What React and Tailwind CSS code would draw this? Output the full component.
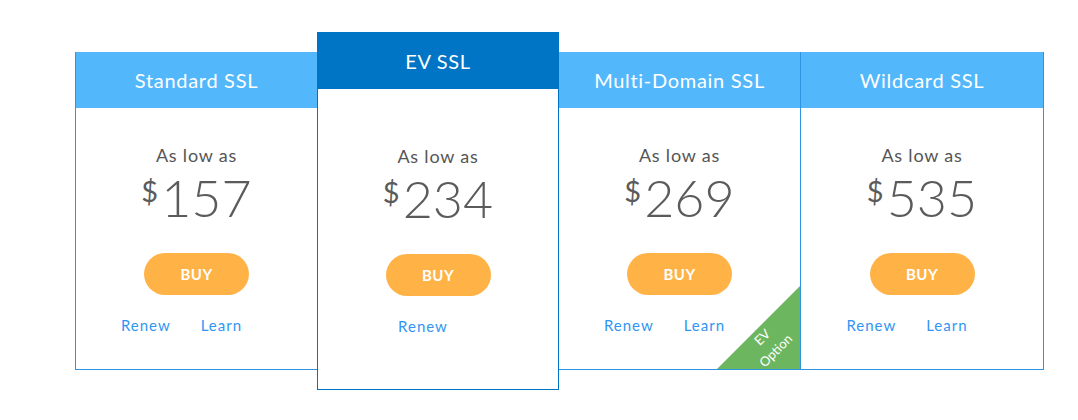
import React from "react";

const plans = [
  { title: "Standard SSL", price: "157", learn: true },
  { title: "EV SSL", price: "234", featured: true },
  { title: "Multi-Domain SSL", price: "269", learn: true, ribbon: true },
  { title: "Wildcard SSL", price: "535", learn: true },
];

const Card = ({ title, price, learn, featured, ribbon, className }) => {
  return (
    <div
      className={`relative flex flex-col bg-white ${
        featured ? "h-[358px] border border-[#0074c4]" : "mt-[20px] h-[318px] border-b border-[#2f93e4]"
      } ${className}`}
    >
      <div
        className={`flex h-[56px] items-center justify-center text-[20px] tracking-[0.7px] text-white ${
          featured ? "bg-[#0075c5]" : "bg-[#53b7fc]"
        }`}
      >
        {title}
      </div>
      <div className={`flex flex-col items-center ${featured ? "pt-[55px]" : "pt-[35px]"}`}>
        <div className="text-[18px] leading-[24px] tracking-[0.8px] text-[#555555]">As low as</div>
        <div className="mt-[4px] flex items-start text-[#5b5b5b]">
          <span className="mt-[5px] text-[29px] leading-none">$</span>
          <span className="ml-[3px] text-[52px] font-light leading-[52px]">{price}</span>
        </div>
        <button className="mt-[30px] h-[42px] w-[105px] rounded-full bg-[#ffb347] text-[15px] font-bold tracking-[0.5px] text-white">
          BUY
        </button>
        <div className="mt-[20px] flex gap-[30px] pr-[30px] text-[15px] leading-[20px] tracking-[1px] text-[#3195f3]">
          <span>Renew</span>
          {learn && <span>Learn</span>}
        </div>
      </div>
      {ribbon && (
        <>
          <div className="absolute bottom-0 right-0 h-[83px] w-[83px] bg-[#6db660] [clip-path:polygon(100%_0,100%_100%,0_100%)]" />
          <div className="absolute left-[178px] top-[273px] h-[38px] w-[64px] -rotate-45 text-center text-[13px] leading-[19px] text-white">
            EV
            <br />
            Option
          </div>
        </>
      )}
    </div>
  );
};

export default function App() {
  return (
    <div
      className="h-[420px] w-[1078px] bg-white pl-[75px] pt-[32px]"
      style={{ fontFamily: "Lato, 'Noto Sans', sans-serif" }}
    >
      <div className="flex items-start">
        <Card {...plans[0]} className="w-[242px] border-l" />
        <Card {...plans[1]} className="w-[242px]" />
        <Card {...plans[2]} className="w-[242px] border-r" />
        <Card {...plans[3]} className="w-[243px] border-r" />
      </div>
    </div>
  );
}
